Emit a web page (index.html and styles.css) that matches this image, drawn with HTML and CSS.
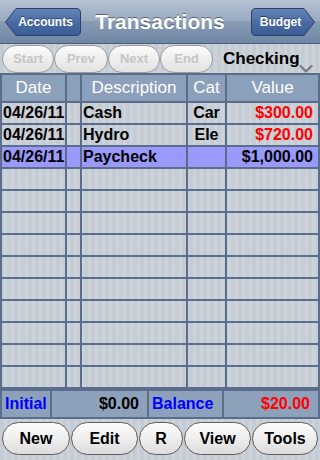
FILE: index.html
```html
<!DOCTYPE html>
<html>
<head>
<meta charset="utf-8">
<link rel="stylesheet" href="styles.css">
</head>
<body>
<div class="screen">
  <header class="nav">
    <button class="navbtn back">
      <svg width="78" height="30" viewBox="0 0 78 30">
        <defs>
          <linearGradient id="gb1" x1="0" y1="0" x2="0" y2="1">
            <stop offset="0" stop-color="#6686b8"/>
            <stop offset="0.5" stop-color="#4a6ca4"/>
            <stop offset="1" stop-color="#3a5c96"/>
          </linearGradient>
        </defs>
        <path d="M1.5 15 L12 1.5 H72 Q76.5 1.5 76.5 6 V24 Q76.5 28.5 72 28.5 H12 Z" fill="url(#gb1)" stroke="#2c4166" stroke-width="1"/>
      </svg>
      <span class="back-label">Accounts</span>
    </button>
    <h1 class="title">Transactions</h1>
    <button class="navbtn fwd">
      <svg width="66" height="30" viewBox="0 0 66 30">
        <defs>
          <linearGradient id="gb2" x1="0" y1="0" x2="0" y2="1">
            <stop offset="0" stop-color="#6686b8"/>
            <stop offset="0.5" stop-color="#4a6ca4"/>
            <stop offset="1" stop-color="#3a5c96"/>
          </linearGradient>
        </defs>
        <path d="M6 1.5 H54 L64.5 15 L54 28.5 H6 Q1.5 28.5 1.5 24 V6 Q1.5 1.5 6 1.5 Z" fill="url(#gb2)" stroke="#2c4166" stroke-width="1"/>
      </svg>
      <span class="fwd-label">Budget</span>
    </button>
  </header>

  <div class="toolbar">
    <button class="seg seg-start">Start</button>
    <button class="seg seg-prev">Prev</button>
    <button class="seg seg-next">Next</button>
    <button class="seg seg-end">End</button>
    <div class="account">Checking
      <svg class="chev" width="14" height="8" viewBox="0 0 14 8"><polyline points="1.5,1 7,6.5 12.5,1" fill="none" stroke="#7e7e7e" stroke-width="2.4" stroke-linecap="round" stroke-linejoin="round"/></svg>
    </div>
  </div>

  <div class="grid">
    <div class="c h">Date</div><div class="c h"></div><div class="c h">Description</div><div class="c h">Cat</div><div class="c h">Value</div>

    <div class="c d">04/26/11</div><div class="c"></div><div class="c t">Cash</div><div class="c m">Car</div><div class="c v neg">$300.00</div>
    <div class="c d">04/26/11</div><div class="c"></div><div class="c t">Hydro</div><div class="c m">Ele</div><div class="c v neg">$720.00</div>
    <div class="c d sel">04/26/11</div><div class="c sel"></div><div class="c t sel">Paycheck</div><div class="c m sel"></div><div class="c v sel">$1,000.00</div>

    <div class="c"></div><div class="c"></div><div class="c"></div><div class="c"></div><div class="c"></div>
    <div class="c"></div><div class="c"></div><div class="c"></div><div class="c"></div><div class="c"></div>
    <div class="c"></div><div class="c"></div><div class="c"></div><div class="c"></div><div class="c"></div>
    <div class="c"></div><div class="c"></div><div class="c"></div><div class="c"></div><div class="c"></div>
    <div class="c"></div><div class="c"></div><div class="c"></div><div class="c"></div><div class="c"></div>
    <div class="c"></div><div class="c"></div><div class="c"></div><div class="c"></div><div class="c"></div>
    <div class="c"></div><div class="c"></div><div class="c"></div><div class="c"></div><div class="c"></div>
    <div class="c"></div><div class="c"></div><div class="c"></div><div class="c"></div><div class="c"></div>
    <div class="c"></div><div class="c"></div><div class="c"></div><div class="c"></div><div class="c"></div>
    <div class="c"></div><div class="c"></div><div class="c"></div><div class="c"></div><div class="c"></div>
  </div>

  <div class="footer">
    <div class="f lbl">Initial</div>
    <div class="f amt">$0.00</div>
    <div class="f lbl">Balance</div>
    <div class="f amt neg">$20.00</div>
  </div>

  <div class="actions">
    <button class="act a-new">New</button>
    <button class="act a-edit">Edit</button>
    <button class="act a-r">R</button>
    <button class="act a-view">View</button>
    <button class="act a-tools">Tools</button>
  </div>
</div>
</body>
</html>
```

FILE: styles.css
```css
* {
  box-sizing: border-box;
  margin: 0;
  padding: 0;
}

html, body {
  width: 320px;
  height: 460px;
  overflow: hidden;
}

body {
  font-family: "Liberation Sans", Arial, sans-serif;
  background: repeating-linear-gradient(90deg, #c5ccd4 0 4px, #cdd3da 4px 7px);
}

.screen {
  display: flex;
  flex-direction: column;
  height: 460px;
}

/* Navigation bar */
.nav {
  height: 44px;
  background: linear-gradient(#b5c2d3, #98a9c0 50%, #889bb5 50%, #6f86a4);
  border-bottom: 1px solid #4b5d78;
  display: grid;
  grid-template-columns: 1fr auto 1fr;
  align-items: center;
}

.title {
  font-size: 21px;
  font-weight: bold;
  color: #fff;
  text-shadow: 0 -1px 0 rgba(0, 0, 0, 0.45);
  line-height: 1;
}

.navbtn {
  display: grid;
  background: none;
  border: 0;
  font-family: inherit;
  font-size: 12px;
  font-weight: bold;
  color: #fff;
  text-shadow: 0 -1px 0 rgba(0, 0, 0, 0.45);
}

.navbtn > * {
  grid-area: 1 / 1;
}

.navbtn span {
  align-self: center;
  justify-self: center;
}

.back {
  justify-self: start;
  margin-left: 4px;
}

.back-label {
  padding-left: 5px;
}

.fwd {
  justify-self: end;
  margin-right: 4px;
}

.fwd-label {
  padding-right: 5px;
}

/* Toolbar */
.toolbar {
  height: 29px;
  display: flex;
  align-items: center;
  padding-left: 2px;
}

.seg {
  height: 28px;
  border: 1px solid #9c9c9c;
  border-radius: 14px;
  background: linear-gradient(#fcfcfc, #eeeeee 50%, #e2e2e2);
  color: #c6c6c6;
  font-family: "Liberation Sans", Arial, sans-serif;
  font-size: 13px;
  font-weight: bold;
}

.seg-start { width: 52px; }
.seg-prev { width: 54px; }
.seg-next { width: 52px; }
.seg-end { width: 53px; }

.account {
  position: relative;
  margin-left: 10px;
  font-size: 17px;
  font-weight: bold;
  color: #000;
}

.chev {
  position: absolute;
  left: 76px;
  top: 16px;
}

/* Table */
.grid {
  display: grid;
  grid-template-columns: 63px 13px 104px 37px 91px;
  grid-template-rows: 26px repeat(13, 20px);
  gap: 2px;
  padding: 2px;
  background: #5a6d8c;
}

.c {
  display: flex;
  align-items: center;
  white-space: nowrap;
  font-size: 16px;
  font-weight: bold;
  color: #000;
  background: repeating-linear-gradient(90deg, #c5ccd4 0 4px, #cdd3da 4px 7px);
  background-attachment: fixed;
}

.h {
  background: #8ba0bb;
  color: #fff;
  font-weight: normal;
  font-size: 17px;
  justify-content: center;
}

.d { padding-left: 1px; }
.t { padding-left: 1px; }
.m { justify-content: center; }
.v { justify-content: flex-end; padding-right: 5px; }

.neg { color: #ff0000; }

.sel {
  background: #9a9afb;
}

/* Footer totals */
.footer {
  display: grid;
  grid-template-columns: 48px 95px 73px 94px;
  grid-template-rows: 26px;
  gap: 2px;
  padding: 2px;
  background: #5a6d8c;
}

.f {
  display: flex;
  align-items: center;
  background: #8ea1bb;
  font-size: 16px;
  font-weight: bold;
  white-space: nowrap;
}

.lbl {
  color: #0000ff;
  padding-left: 3px;
}

.amt {
  justify-content: flex-end;
  padding-right: 8px;
  color: #000;
}

.amt.neg { color: #ff0000; }

/* Bottom action buttons */
.actions {
  display: flex;
  gap: 1px;
  padding: 3px 2px 0;
}

.act {
  height: 33px;
  border: 1px solid #5e5e5e;
  border-radius: 17px;
  background: linear-gradient(#fdfdfd, #eeeeee 50%, #dcdcdc);
  font-family: "Liberation Sans", Arial, sans-serif;
  font-size: 16px;
  font-weight: bold;
  color: #000;
}

.a-new { width: 68px; }
.a-edit { width: 67px; }
.a-r { width: 44px; }
.a-view { width: 67px; }
.a-tools { width: 66px; }
```
